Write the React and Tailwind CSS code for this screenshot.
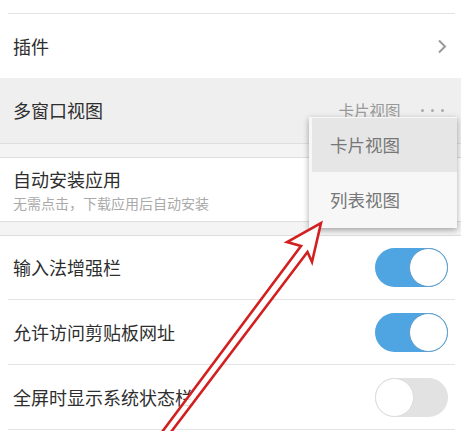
import React from "react";

const font = { fontFamily: '"Noto Sans CJK SC", "Noto Sans", sans-serif' };

function Sep() {
  return <div className="h-px bg-[#e4e4e4] ml-[8px] mr-[6px]" />;
}

function Band() {
  return (
    <div className="h-[15px] bg-[#f4f4f4] border-y border-[#dedede]" />
  );
}

function Toggle({ on }) {
  return on ? (
    <div className="w-[73px] h-[39px] rounded-full bg-[#4ea5e2] flex justify-end">
      <div className="w-[39px] h-[39px] rounded-full bg-white border-[1.5px] border-[#5d9bc9]" />
    </div>
  ) : (
    <div className="w-[73px] h-[39px] rounded-full bg-[#e2e2e2] flex justify-start">
      <div className="w-[39px] h-[39px] rounded-full bg-white border-[1.5px] border-[#dcdcdc]" />
    </div>
  );
}

function ToggleRow({ label, on, h }) {
  return (
    <div className={`flex items-center justify-between pl-[13px] pr-[13px] ${h}`}>
      <span className="text-[18px] text-[#2e2e2e]">{label}</span>
      <Toggle on={on} />
    </div>
  );
}

export default function App() {
  return (
    <div
      className="relative w-[461px] h-[431px] overflow-hidden bg-white"
      style={font}
    >
      <div className="h-[13px] bg-white" />
      <Sep />
      <div className="h-[64px] flex items-center justify-between pl-[13px] pr-[14px]">
        <span className="text-[18px] text-[#2e2e2e]">插件</span>
        <svg width="10" height="15" viewBox="0 0 10 15">
          <path d="M2 1.5 L8 7.5 L2 13.5" fill="none" stroke="#9a9a9a" strokeWidth="2" />
        </svg>
      </div>
      <div className="h-[65px] flex items-center justify-between pl-[13px] pr-[17px] bg-[#efefef]">
        <span className="text-[18px] text-[#2e2e2e]">多窗口视图</span>
        <div className="flex items-center">
          <span className="text-[15.5px] text-[#999]">卡片视图</span>
          <div className="flex gap-[6.5px] ml-[20px]">
            <div className="w-[3.5px] h-[3.5px] rounded-full bg-[#aaa]" />
            <div className="w-[3.5px] h-[3.5px] rounded-full bg-[#aaa]" />
            <div className="w-[3.5px] h-[3.5px] rounded-full bg-[#aaa]" />
          </div>
        </div>
      </div>
      <Band />
      <div className="h-[63px] flex flex-col justify-center pl-[13px]">
        <span className="text-[18px] leading-[24px] text-[#2e2e2e]">自动安装应用</span>
        <span className="text-[14px] leading-[20px] text-[#aaa] mt-[2px]">
          无需点击，下载应用后自动安装
        </span>
      </div>
      <Band />
      <ToggleRow label="输入法增强栏" on h="h-[63px]" />
      <Sep />
      <ToggleRow label="允许访问剪贴板网址" on h="h-[64px]" />
      <Sep />
      <ToggleRow label="全屏时显示系统状态栏" on={false} h="h-[64px]" />
      <Sep />

      {/* popup menu */}
      <div className="absolute left-[309px] top-[117px] w-[148px] h-[111px] bg-[#f7f7f7] shadow-[0_2px_6px_rgba(0,0,0,0.35)] pt-[1px] pl-[3px] flex flex-col">
        <div className="h-[54px] bg-[#e6e6e6] flex items-center pl-[18px]">
          <span className="text-[17.5px] text-[#777]">卡片视图</span>
        </div>
        <div className="h-[56px] flex items-center pl-[18px]">
          <span className="text-[17.5px] text-[#777]">列表视图</span>
        </div>
      </div>

      {/* red arrow annotation */}
      <svg
        className="absolute left-0 top-0 pointer-events-none"
        width="461"
        height="431"
        viewBox="0 0 461 431"
      >
        <polygon
          points="321,223 312,262 307.5,252 168,436 159,436 301,246 287,242"
          fill="rgba(255,255,255,0.85)"
          stroke="#d21f1f"
          strokeWidth="2.6"
          strokeLinejoin="miter"
        />
      </svg>
    </div>
  );
}
